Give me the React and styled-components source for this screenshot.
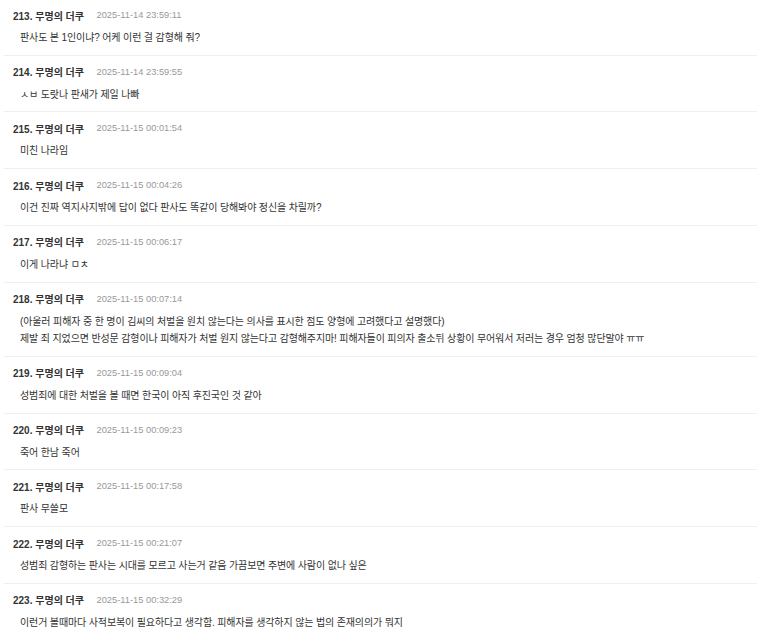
import React from "react";
import styled, { createGlobalStyle } from "styled-components";

const Global = createGlobalStyle`
  html, body { margin: 0; padding: 0; background: #fff; }
  body { font-family: "Liberation Sans", "Noto Sans CJK KR", sans-serif; color: #333; }
`;

const List = styled.div`
  display: flex;
  flex-direction: column;
  padding: 0 1px 0 4px;
`;

const Item = styled.div`
  display: flex;
  flex-direction: column;
  gap: 7px;
  padding: ${(p) => (p.$first ? "8px" : "9px")} 9px 8px;
  border-top: ${(p) => (p.$first ? "none" : "1px solid #efefef")};
`;

const Header = styled.div`
  display: flex;
  align-items: center;
  gap: 12.5px;
  height: 14px;
`;

const Name = styled.span`
  font-size: 10px;
  font-weight: 700;
  color: #333;
`;

const Date = styled.span`
  font-size: 9.3px;
  color: #999;
`;

const Body = styled.div`
  margin-left: 7px;
  font-size: 10px;
  letter-spacing: -0.13px;
  line-height: 17.7px;
  color: #333;
`;

const comments = [
  { n: 213, d: "2025-11-14 23:59:11", t: ["판사도 본 1인이냐? 어케 이런 걸 감형해 줘?"] },
  { n: 214, d: "2025-11-14 23:59:55", t: ["ㅅㅂ 도랏나 판새가 제일 나빠"] },
  { n: 215, d: "2025-11-15 00:01:54", t: ["미친 나라임"] },
  { n: 216, d: "2025-11-15 00:04:26", t: ["이건 진짜 역지사지밖에 답이 없다 판사도 똑같이 당해봐야 정신을 차릴까?"] },
  { n: 217, d: "2025-11-15 00:06:17", t: ["이게 나라냐 ㅁㅊ"] },
  {
    n: 218,
    d: "2025-11-15 00:07:14",
    t: [
      "(아울러 피해자 중 한 명이 김씨의 처벌을 원치 않는다는 의사를 표시한 점도 양형에 고려했다고 설명했다)",
      "제발 죄 지었으면 반성문 감형이나 피해자가 처벌 원지 않는다고 감형해주지마! 피해자들이 피의자 출소뒤 상황이 무어워서 저러는 경우 엄청 많단말야 ㅠㅠ",
    ],
  },
  { n: 219, d: "2025-11-15 00:09:04", t: ["성범죄에 대한 처벌을 볼 때면 한국이 아직 후진국인 것 같아"] },
  { n: 220, d: "2025-11-15 00:09:23", t: ["죽어 한남 죽어"] },
  { n: 221, d: "2025-11-15 00:17:58", t: ["판사 무쓸모"] },
  { n: 222, d: "2025-11-15 00:21:07", t: ["성범죄 감형하는 판사는 시대를 모르고 사는거 같음 가끔보면 주변에 사람이 없나 싶은"] },
  { n: 223, d: "2025-11-15 00:32:29", t: ["이런거 볼때마다 사적보복이 필요하다고 생각함. 피해자를 생각하지 않는 법의 존재의의가 뭐지"] },
];

export default function App() {
  return (
    <>
      <Global />
      <List>
        {comments.map((c, i) => (
          <Item key={c.n} $first={i === 0}>
            <Header>
              <Name>{c.n}. 무명의 더쿠</Name>
              <Date>{c.d}</Date>
            </Header>
            <Body>
              {c.t.map((line, j) => (
                <div key={j}>{line}</div>
              ))}
            </Body>
          </Item>
        ))}
      </List>
    </>
  );
}
